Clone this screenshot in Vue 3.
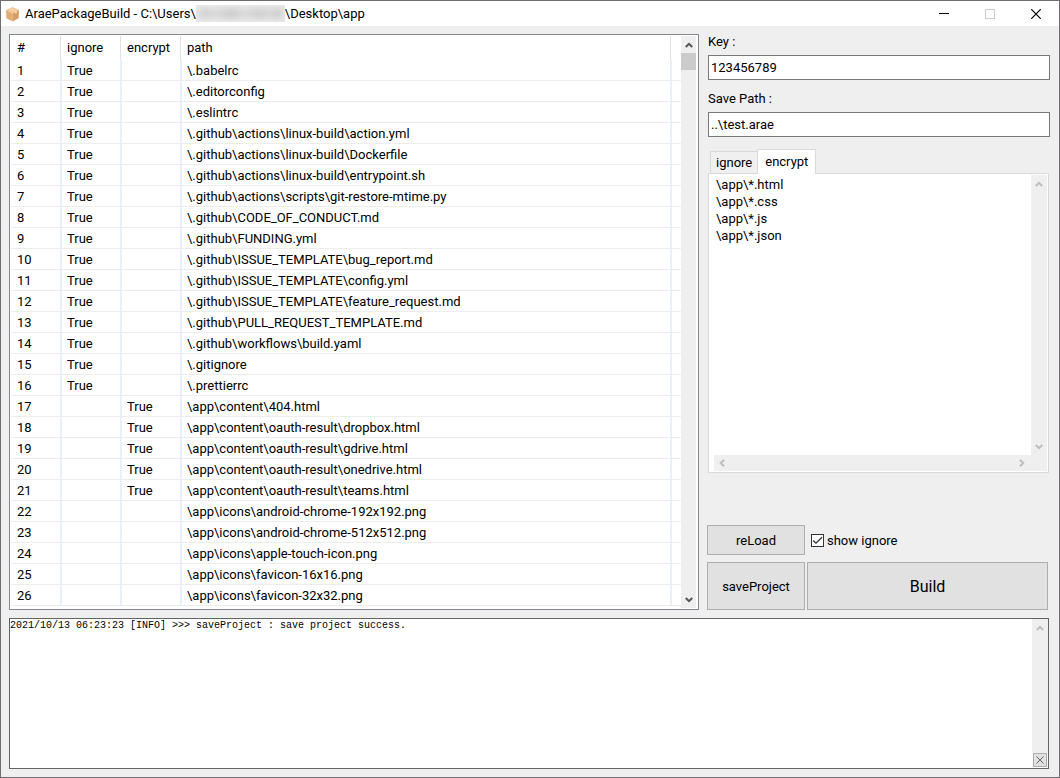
<script setup>
import { ref, computed } from 'vue'

const paths = [
  '\\.babelrc',
  '\\.editorconfig',
  '\\.eslintrc',
  '\\.github\\actions\\linux-build\\action.yml',
  '\\.github\\actions\\linux-build\\Dockerfile',
  '\\.github\\actions\\linux-build\\entrypoint.sh',
  '\\.github\\actions\\scripts\\git-restore-mtime.py',
  '\\.github\\CODE_OF_CONDUCT.md',
  '\\.github\\FUNDING.yml',
  '\\.github\\ISSUE_TEMPLATE\\bug_report.md',
  '\\.github\\ISSUE_TEMPLATE\\config.yml',
  '\\.github\\ISSUE_TEMPLATE\\feature_request.md',
  '\\.github\\PULL_REQUEST_TEMPLATE.md',
  '\\.github\\workflows\\build.yaml',
  '\\.gitignore',
  '\\.prettierrc',
  '\\app\\content\\404.html',
  '\\app\\content\\oauth-result\\dropbox.html',
  '\\app\\content\\oauth-result\\gdrive.html',
  '\\app\\content\\oauth-result\\onedrive.html',
  '\\app\\content\\oauth-result\\teams.html',
  '\\app\\icons\\android-chrome-192x192.png',
  '\\app\\icons\\android-chrome-512x512.png',
  '\\app\\icons\\apple-touch-icon.png',
  '\\app\\icons\\favicon-16x16.png',
  '\\app\\icons\\favicon-32x32.png'
]
const files = paths.map((path, i) => ({
  id: i + 1,
  path,
  ignore: i < 16 ? 'True' : '',
  encrypt: i >= 16 && i < 21 ? 'True' : ''
}))

const key = ref('123456789')
const savePath = ref('..\\test.arae')
const tab = ref('encrypt')
const rules = ref({ ignore: '', encrypt: '\\app\\*.html\n\\app\\*.css\n\\app\\*.js\n\\app\\*.json' })
const showIgnore = ref(true)
const shown = computed(() => files.filter((f) => showIgnore.value || !f.ignore))
const log = ref('2021/10/13 06:23:23 [INFO] >>> saveProject : save project success.')
const userDir = 'C:\\Users\\'
const appDir = '\\Desktop\\app'
</script>

<template>
  <div class="window">
    <header class="titlebar">
      <svg class="logo" viewBox="0 0 16 16" aria-hidden="true">
        <path d="M8 0.5 15 3.8 8 7.5 1 3.8Z" fill="#f1c898" />
        <path d="M1 3.8 8 7.5V16L1.5 12.5Z" fill="#e4ab70" />
        <path d="M15 3.8 8 7.5V16l6.5-3.5Z" fill="#d79c60" />
        <path d="M4.2 2.3 11 5.8V8L12.5 7.2V5L5.7 1.6Z" fill="#f5d6b0" />
      </svg>
      <h1 class="title">AraePackageBuild - {{ userDir }}<span class="redacted"><i></i></span>{{ appDir }}</h1>
      <button class="winbtn" aria-label="Minimize">
        <svg viewBox="0 0 10 10" shape-rendering="crispEdges"><path d="M0 5.5H10" transform="translate(0 -1)" stroke="#000" /></svg>
      </button>
      <button class="winbtn" aria-label="Maximize" disabled>
        <svg viewBox="0 0 10 10" shape-rendering="crispEdges"><path d="M.5.5H9.5V9.5H.5Z" fill="none" stroke="#ccc" /></svg>
      </button>
      <button class="winbtn" aria-label="Close">
        <svg viewBox="0 0 10 10"><path d="M.2.2 9.8 9.8M9.8.2.2 9.8" stroke="#000" stroke-width="1.2" /></svg>
      </button>
    </header>

    <main class="body">
      <section class="files">
        <table>
          <colgroup><col class="c-id" /><col class="c-flag" /><col class="c-flag" /><col /><col class="c-rest" /></colgroup>
          <thead>
            <tr><th>#</th><th>ignore</th><th>encrypt</th><th>path</th><td></td></tr>
          </thead>
          <tbody>
            <tr v-for="f in shown" :key="f.id">
              <td>{{ f.id }}</td><td>{{ f.ignore }}</td><td>{{ f.encrypt }}</td><td>{{ f.path }}</td><td></td>
            </tr>
          </tbody>
        </table>
        <div class="vbar live">
          <button aria-label="Scroll up"><svg viewBox="0 0 8 6"><path d="M.8 5 4 1.8 7.2 5" /></svg></button>
          <div class="thumb"></div>
          <button class="end" aria-label="Scroll down"><svg viewBox="0 0 8 6"><path d="M.8 1 4 4.2 7.2 1" /></svg></button>
        </div>
      </section>

      <section class="side">
        <label class="caption" for="key">Key :</label>
        <input id="key" v-model="key" class="field" type="text" />
        <label class="caption second" for="save">Save Path :</label>
        <input id="save" v-model="savePath" class="field" type="text" />

        <div class="tabs" role="tablist">
          <button role="tab" :class="{ active: tab === 'ignore' }" :aria-selected="tab === 'ignore'" @click="tab = 'ignore'">ignore</button>
          <button role="tab" :class="{ active: tab === 'encrypt' }" :aria-selected="tab === 'encrypt'" @click="tab = 'encrypt'">encrypt</button>
        </div>
        <div class="panel">
          <textarea v-model="rules[tab]" :aria-label="tab + ' patterns'" wrap="off" spellcheck="false"></textarea>
          <div class="vbar">
            <button aria-label="Scroll patterns up" disabled><svg viewBox="0 0 8 6"><path d="M.8 5 4 1.8 7.2 5" /></svg></button>
            <button class="end" aria-label="Scroll patterns down" disabled><svg viewBox="0 0 8 6"><path d="M.8 1 4 4.2 7.2 1" /></svg></button>
          </div>
          <div class="hbar">
            <button aria-label="Scroll patterns left" disabled><svg class="side-arrow" viewBox="0 0 6 8"><path d="M5 .8 1.8 4 5 7.2" /></svg></button>
            <button class="end" aria-label="Scroll patterns right" disabled><svg class="side-arrow" viewBox="0 0 6 8"><path d="M1 .8 4.2 4 1 7.2" /></svg></button>
          </div>
        </div>

        <div class="actions">
          <button class="push">reLoad</button>
          <label class="check">
            <span class="box">
              <input v-model="showIgnore" type="checkbox" />
              <svg v-if="showIgnore" viewBox="0 0 13 13"><path d="M2.2 6.5 5 9.2 11 3.2" /></svg>
            </span>
            show ignore
          </label>
          <button class="push tall">saveProject</button>
          <button class="push tall build">Build</button>
        </div>
      </section>
    </main>

    <section class="log">
      <textarea v-model="log" aria-label="Log" readonly spellcheck="false"></textarea>
      <div class="logbar">
        <div class="vbar">
          <button aria-label="Scroll log up" disabled><svg viewBox="0 0 8 6"><path d="M.8 5 4 1.8 7.2 5" /></svg></button>
        </div>
        <button class="clear" aria-label="Clear log" @click="log = ''">
          <svg viewBox="0 0 8 8"><path d="M.5.5 7.5 7.5M7.5.5.5 7.5" /></svg>
        </button>
      </div>
    </section>
  </div>
</template>

<style>
body {
  margin: 0;
}
</style>

<style scoped>
.window {
  display: flex;
  flex-direction: column;
  box-sizing: border-box;
  min-height: 100vh;
  border: 1px solid #6f6d6f;
  background: #efefef;
  color: #000;
  font: 13px/17px Roboto, "Open Sans", sans-serif;
}
button,
input,
textarea {
  box-sizing: border-box;
  margin: 0;
  color: inherit;
  font: inherit;
  border-radius: 0;
  outline: 0;
}
.titlebar {
  display: flex;
  align-items: center;
  height: 25px;
  background: #fff;
}
.logo {
  width: 15px;
  height: 16px;
  margin: 0 5px 0 4px;
}
.title {
  display: flex;
  flex: 1;
  margin: 0;
  font-size: 13px;
  font-weight: 400;
  white-space: pre;
}
.redacted {
  width: 89px;
  height: 17px;
  overflow: hidden;
  background: #e9e9e9;
}
.redacted i {
  display: block;
  height: 9px;
  margin: 4px 3px;
  background: linear-gradient(90deg, #ccc, #d8d8d8 20%, #c8c8c8 40%, #dadada 55%, #cbcbcb 72%, #d6d6d6 85%, #c6c6c6);
  filter: blur(3px);
}
.winbtn {
  display: flex;
  align-items: center;
  justify-content: center;
  width: 46px;
  height: 25px;
  padding: 0;
  border: 0;
  background: none;
}
.winbtn svg {
  width: 10px;
  height: 10px;
}
.body {
  display: grid;
  grid-template-columns: minmax(0, 1fr) 343px;
  gap: 8px;
  padding: 8px 9px 8px 8px;
}
.files {
  display: flex;
  padding: 1px 2px 1px 1px;
  border: 1px solid #828790;
  background: #fff;
}
table {
  flex: 1;
  align-self: flex-start;
  table-layout: fixed;
  width: 0;
  margin-bottom: 2px;
  border-spacing: 0;
}
.c-id {
  width: 50px;
}
.c-flag {
  width: 60px;
}
.c-rest {
  width: 10px;
}
th,
td {
  box-sizing: border-box;
  height: 21px;
  padding: 0 0 0 5px;
  border: solid #e8f0fc;
  border-width: 0 1px 0 1px;
  text-align: left;
  font-weight: 400;
  white-space: nowrap;
}
tbody td {
  border-bottom: 1px solid #ededed;
}
th,
thead td {
  height: 24px;
  padding-bottom: 2px;
  border-left-color: transparent;
  border-right-color: #e0e0e0;
}
th:first-child,
td:first-child {
  padding-left: 6px;
  border-left: 0;
}
td:last-child {
  padding: 0;
  border-right: 0;
}
.vbar {
  display: flex;
  flex-direction: column;
  width: 15px;
  background: #efefef;
}
.vbar button,
.hbar button {
  display: flex;
  align-items: center;
  justify-content: center;
  width: 15px;
  height: 17px;
  padding: 0;
  border: 0;
  background: none;
}
.hbar button {
  height: 15px;
}
.vbar svg {
  width: 8px;
  height: 6px;
}
.side-arrow {
  width: 6px;
  height: 8px;
}
.vbar path,
.hbar path {
  fill: none;
  stroke: #bdbdbd;
  stroke-width: 2;
}
.live path {
  stroke: #555;
}
.thumb {
  height: 17px;
  background: #cbcbcb;
}
.vbar .end {
  margin-top: auto;
}
.side {
  display: flex;
  flex-direction: column;
}
.caption {
  margin-left: 1px;
  line-height: 16px;
}
.field {
  height: 25px;
  margin: 5px 0 0 1px;
  padding: 0 2px 1px;
  border: 1px solid #7a7a7a;
  background: #fff;
}
.second {
  margin-top: 11px;
}
.tabs {
  display: flex;
  align-items: flex-end;
  margin: 12px 0 0 3px;
}
.tabs button {
  height: 22px;
  padding: 0 5px;
  border: 1px solid #d9d9d9;
  border-width: 1px 0 0 1px;
  background: #f0f0f0;
}
.tabs .active {
  position: relative;
  z-index: 1;
  height: 25px;
  margin-bottom: -1px;
  padding: 0 7px 2px;
  border-width: 1px 1px 0;
  background: #fff;
}
.panel {
  display: grid;
  grid-template-columns: minmax(0, 1fr) 16px;
  grid-template-rows: 1fr 16px;
  height: 300px;
  box-sizing: border-box;
  margin: 0 1px;
  padding: 1px 1px 1px 5px;
  border: 1px solid #d9d9d9;
  background: #fff;
}
.panel textarea {
  width: 100%;
  padding: 1px 2px 0;
  border: 0;
  resize: none;
  overflow: hidden;
  background: #fff;
}
.panel .vbar {
  width: 16px;
}
.hbar {
  display: flex;
  grid-column: 1 / 3;
  padding-right: 18px;
  background: #efefef;
}
.hbar .end {
  margin-left: auto;
}
.actions {
  display: grid;
  grid-template-columns: 98px minmax(0, 1fr);
  gap: 7px 2px;
  margin: auto 2px 0 0;
}
.push {
  height: 30px;
  padding: 0;
  border: 1px solid #adadad;
  background: #e1e1e1;
}
.tall {
  height: 48px;
}
.build {
  font-size: 16px;
}
.check {
  display: flex;
  align-items: center;
  gap: 3px;
  padding-left: 4px;
}
.box {
  position: relative;
  width: 13px;
  height: 13px;
}
.box input {
  display: block;
  width: 13px;
  height: 13px;
  border: 1px solid #333;
  background: #fff;
  appearance: none;
}
.box svg {
  position: absolute;
  inset: 0;
  pointer-events: none;
}
.box path {
  fill: none;
  stroke: #333;
  stroke-width: 1.3;
}
.log {
  display: flex;
  flex: 1;
  margin: 0 10px 8px 8px;
  border: 1px solid #646464;
  background: #fff;
}
.log textarea {
  flex: 1;
  min-height: 140px;
  padding: 1px 0 0;
  border: 0;
  resize: none;
  overflow: hidden;
  background: #fff;
  font: 10px/12px "Liberation Mono", monospace;
}
.logbar {
  display: flex;
  flex-direction: column;
  padding-bottom: 1px;
}
.logbar .vbar {
  flex: 1;
  width: 16px;
}
.clear {
  display: flex;
  align-items: center;
  justify-content: center;
  width: 14px;
  height: 14px;
  margin-left: 1px;
  padding: 0;
  border: 1px solid #adadad;
  background: #e1e1e1;
}
.clear svg {
  width: 8px;
  height: 8px;
}
.clear path {
  stroke: #666;
}
</style>
